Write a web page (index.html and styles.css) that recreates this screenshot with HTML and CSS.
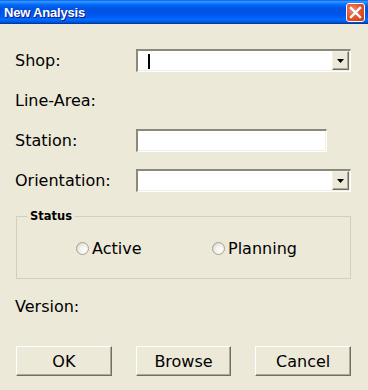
FILE: index.html
```html
<!DOCTYPE html>
<html>
<head>
<meta charset="utf-8">
<title>New Analysis</title>
<link rel="stylesheet" href="styles.css">
</head>
<body>
<div class="window">
  <div class="titlebar">
    <span class="title">New Analysis</span>
    <span class="close">
      <svg width="13" height="13" viewBox="0 0 13 13"><path d="M2 2 L11 11 M11 2 L2 11" stroke="#fff" stroke-width="2.4" stroke-linecap="square"/></svg>
    </span>
  </div>
  <div class="content">
    <div class="form">
      <label class="lbl">Shop:</label>
      <div class="combo"><span class="caret"></span><span class="drop"><svg width="7" height="4" viewBox="0 0 7 4"><path d="M0 0H7L3.5 4Z" fill="#000"/></svg></span></div>
      <label class="lbl">Line-Area:</label>
      <div></div>
      <label class="lbl">Station:</label>
      <div class="field"></div>
      <label class="lbl">Orientation:</label>
      <div class="combo"><span class="drop"><svg width="7" height="4" viewBox="0 0 7 4"><path d="M0 0H7L3.5 4Z" fill="#000"/></svg></span></div>
    </div>
    <div class="group">
      <span class="legend">Status</span>
      <div class="radios">
        <label class="radio"><span class="dot"></span>Active</label>
        <label class="radio"><span class="dot"></span>Planning</label>
      </div>
    </div>
    <div class="version">Version:</div>
    <div class="buttons">
      <button class="btn">OK</button>
      <button class="btn">Browse</button>
      <button class="btn">Cancel</button>
    </div>
  </div>
</div>
</body>
</html>
```
FILE: styles.css
```css
html, body {
  margin: 0;
  padding: 0;
  background: #ece9d8;
}
.window {
  width: 368px;
  height: 390px;
  background: #ece9d8;
  font-family: "DejaVu Sans", Verdana, sans-serif;
  font-size: 16px;
  color: #000;
  overflow: hidden;
}
.titlebar {
  height: 24px;
  display: flex;
  align-items: center;
  justify-content: space-between;
  padding: 0 3px 0 4px;
  box-sizing: border-box;
  background: linear-gradient(#0058ee 0%, #3593ff 6%, #288eff 10%, #127dff 14%, #036ffc 18%, #0262ee 24%, #0057e5 32%, #0054e3 40%, #0055eb 60%, #005bf5 70%, #026afe 80%, #0062ef 88%, #0052d6 93%, #0040ab 97%, #003092 100%);
}
.title {
  color: #fff;
  font-family: "Liberation Sans", Arial, sans-serif;
  font-weight: bold;
  font-size: 13px;
  letter-spacing: -0.2px;
  text-shadow: 1px 1px 0 #0a1883;
}
.close {
  width: 19px;
  height: 19px;
  box-sizing: border-box;
  border: 1px solid #fff;
  border-radius: 3px;
  background: radial-gradient(circle at 35% 35%, #f08c6c 0%, #e4572f 45%, #c9380f 100%);
  display: flex;
  align-items: center;
  justify-content: center;
}
.content {
  padding: 25px 17px 0 15px;
}
.form {
  display: grid;
  grid-template-columns: 121px 1fr;
  grid-auto-rows: 23px;
  row-gap: 17px;
}
.lbl {
  align-self: center;
  line-height: 19px;
}
.field, .combo {
  box-sizing: border-box;
  height: 23px;
  background: #fff;
  border-top: 2px solid #8b887c;
  border-left: 2px solid #8b887c;
  border-right: 1px solid #fff;
  border-bottom: 1px solid #fff;
  box-shadow: inset -1px -1px 0 #f1efe2;
}
.field {
  width: 191px;
}
.combo {
  width: 215px;
  display: flex;
  align-items: stretch;
  justify-content: space-between;
}
.caret {
  width: 2px;
  height: 15px;
  background: #000;
  align-self: center;
  margin-left: 10px;
}
.drop {
  width: 17px;
  box-sizing: border-box;
  margin: 0 1px 1px auto;
  background: #ece9d8;
  border-top: 1px solid #f4f2e8;
  border-left: 1px solid #f4f2e8;
  border-right: 1px solid #716f64;
  border-bottom: 1px solid #716f64;
  box-shadow: inset -1px -1px 0 #aca899;
  display: flex;
  align-items: center;
  justify-content: center;
}
.group {
  position: relative;
  box-sizing: border-box;
  margin: 24px 0 0 1px;
  width: 335px;
  height: 63px;
  border: 1px solid #d0d0bf;
  display: flex;
  align-items: center;
}
.legend {
  position: absolute;
  top: -9px;
  left: 10px;
  padding: 0 3px;
  background: #ece9d8;
  font-weight: bold;
  font-size: 11.5px;
  line-height: 16px;
}
.radios {
  display: flex;
  padding-left: 59px;
  margin-top: 2px;
}
.radio {
  display: flex;
  align-items: center;
  width: 136px;
}
.dot {
  width: 13px;
  height: 13px;
  box-sizing: border-box;
  border-radius: 50%;
  border: 1px solid #a6a397;
  background: radial-gradient(circle at 65% 65%, #ffffff 0%, #f2f1ea 45%, #cfccbf 100%);
  margin-right: 3px;
}
.version {
  margin-top: 18px;
  line-height: 19px;
}
.buttons {
  display: flex;
  gap: 24px;
  margin: 30px 0 0 1px;
}
.btn {
  width: 96px;
  height: 30px;
  box-sizing: border-box;
  padding: 0;
  font-family: inherit;
  font-size: 16px;
  color: #000;
  background: #ece9d8;
  border-top: 1px solid #ffffff;
  border-left: 1px solid #ffffff;
  border-right: 1px solid #716f64;
  border-bottom: 1px solid #716f64;
  box-shadow: inset -1px -1px 0 #aca899;
}
```
